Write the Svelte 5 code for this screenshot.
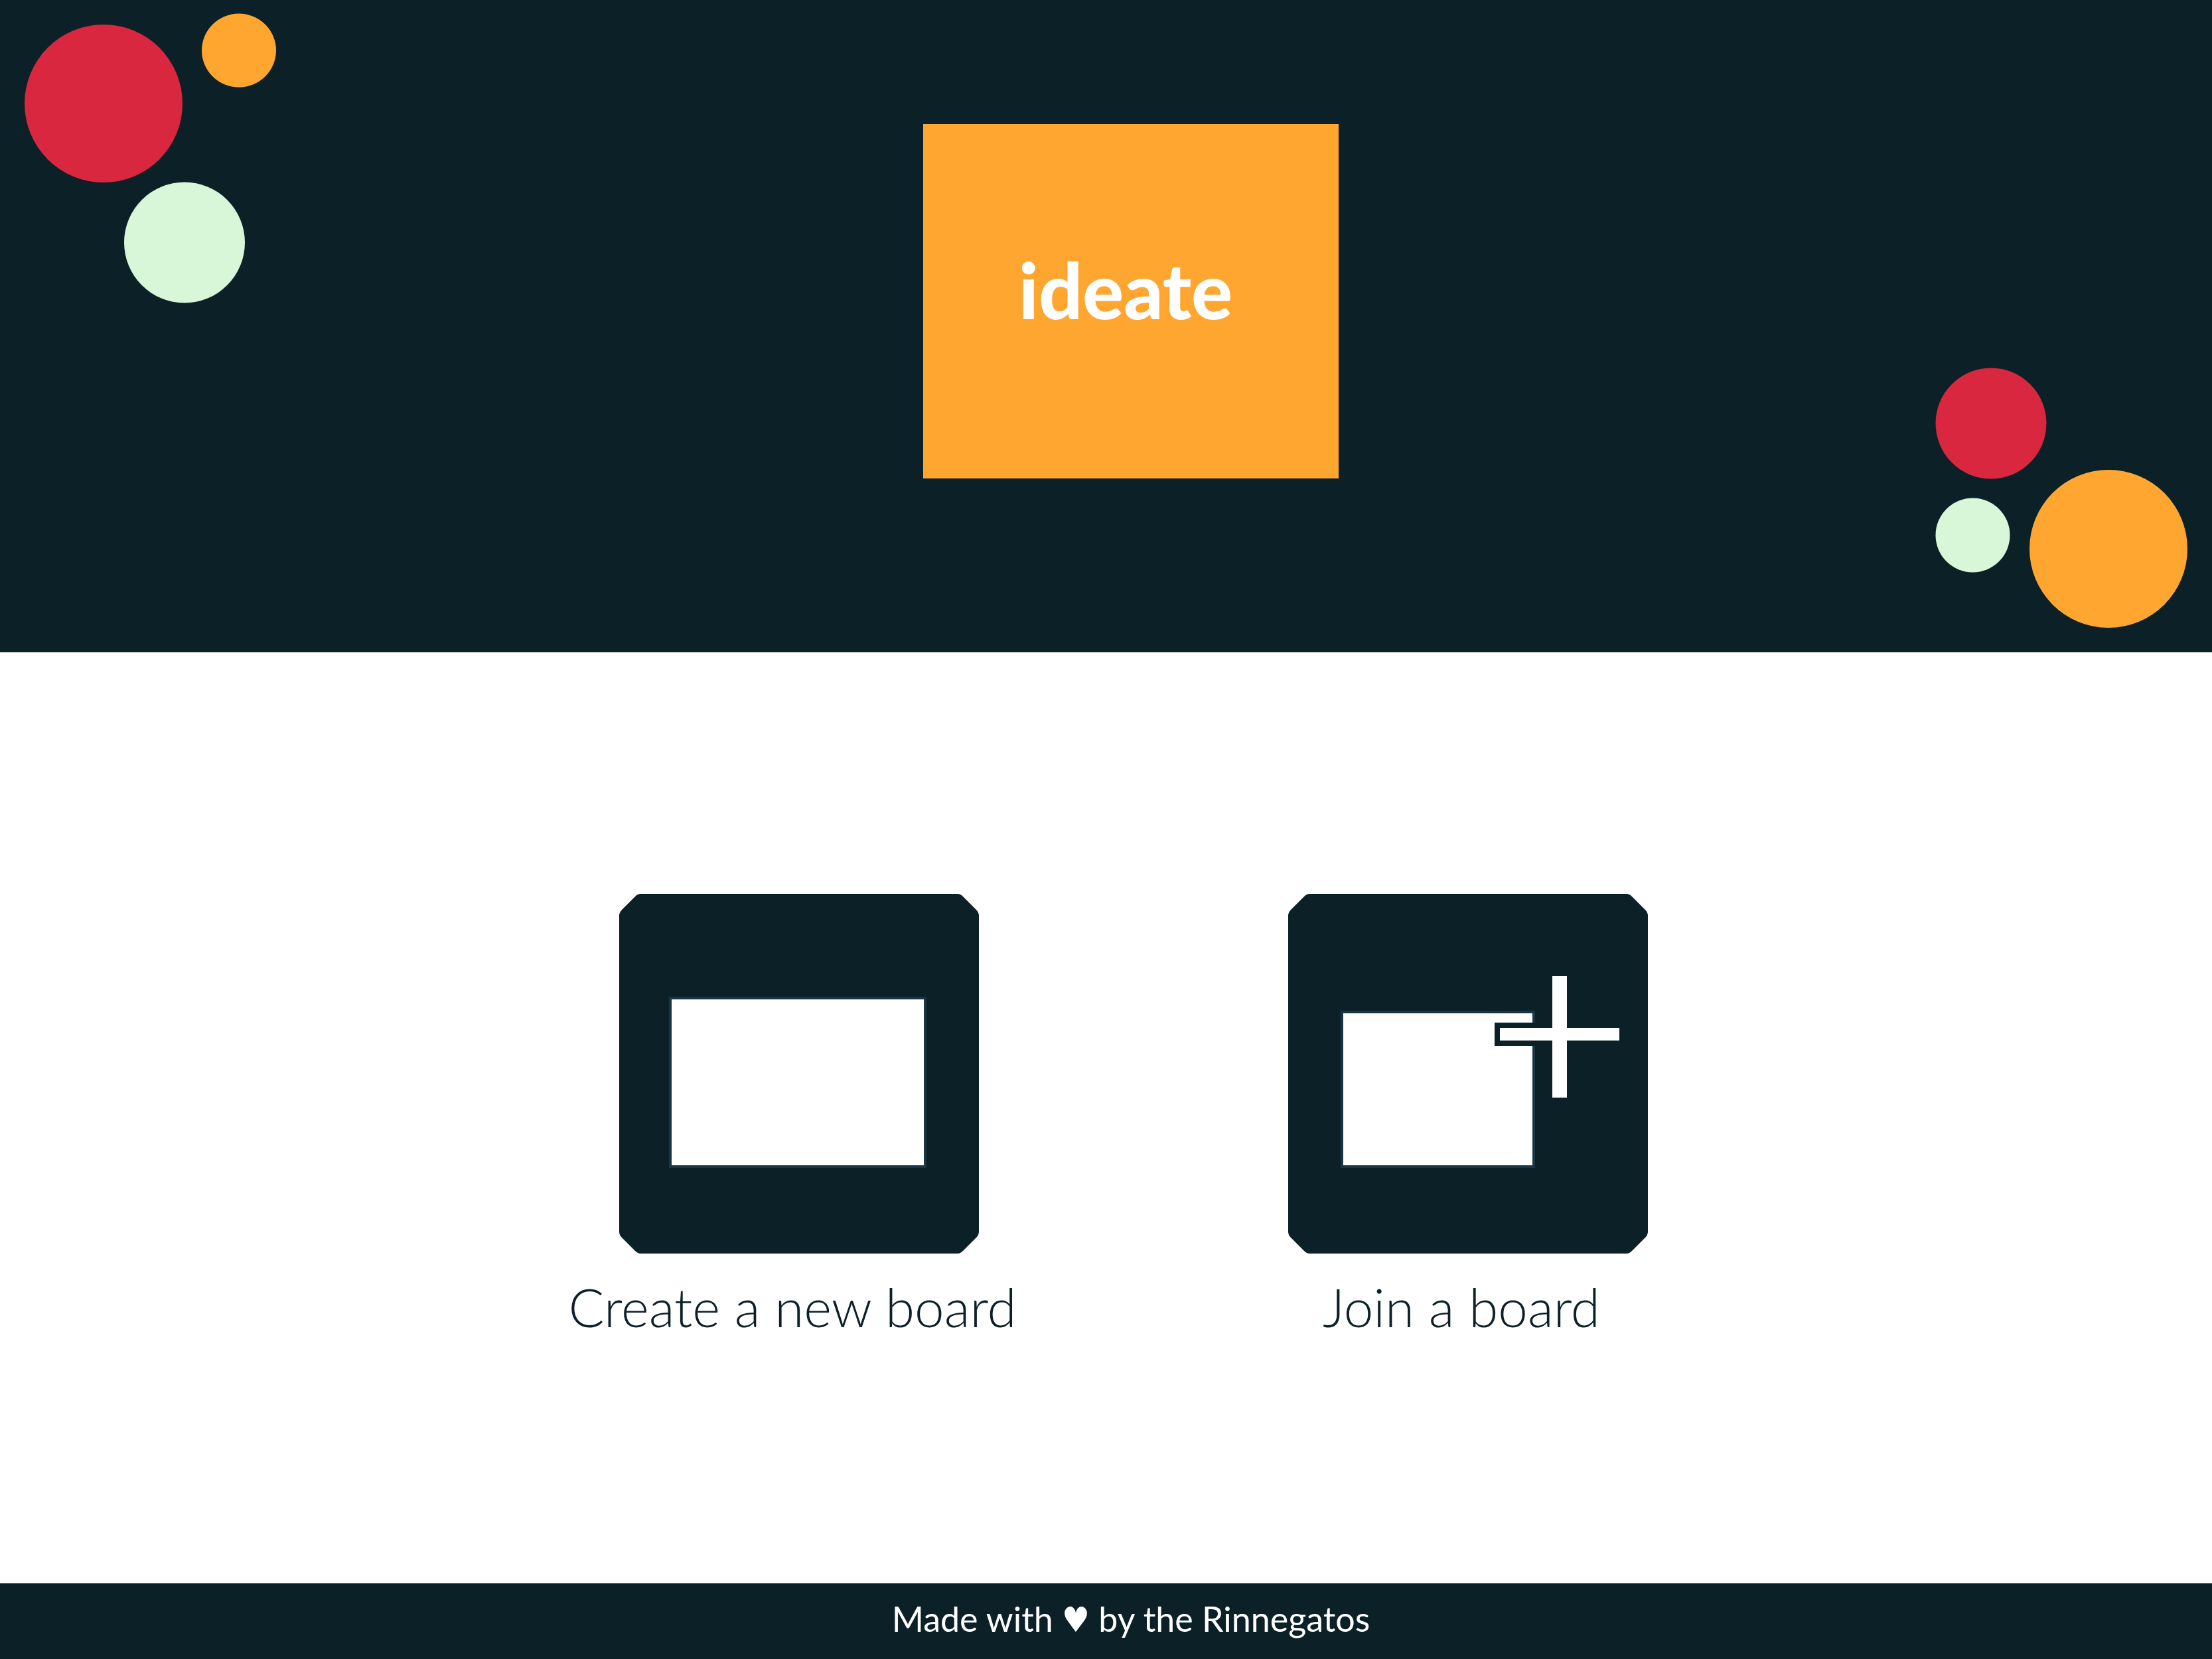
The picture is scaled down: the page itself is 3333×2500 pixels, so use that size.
<script>
  const actions = [
    { id: 'create', label: 'Create a new board' },
    { id: 'join', label: 'Join a board' },
  ];
</script>

<div class="page">
  <header class="hero">
    <svg class="bubbles top-left" viewBox="0 0 420 460" aria-hidden="true">
      <circle class="red" cx="156" cy="156" r="119" />
      <ellipse class="orange" cx="360" cy="76" rx="56" ry="55.5" />
      <circle class="mint" cx="278" cy="365.5" r="91" />
    </svg>

    <h1 class="logo">ideate</h1>

    <svg class="bubbles bottom-right" viewBox="0 0 380 392" aria-hidden="true">
      <circle class="red" cx="84" cy="84" r="83.5" />
      <circle class="mint" cx="56.5" cy="252.5" r="56" />
      <circle class="orange" cx="261" cy="273" r="119" />
    </svg>
  </header>

  <main class="actions">
    {#each actions as action (action.id)}
      <button class="action" type="button">
        <svg class="tile" viewBox="0 0 542 542" aria-hidden="true">
          <path
            class="plate"
            d="M32 0H510Q514 0 518 4L538 24Q542 28 542 33V509Q542 514 538 518L518 538Q514 542 510 542H32Q28 542 24 538L4 518Q0 514 0 509V33Q0 28 4 24L24 4Q28 0 32 0Z"
          />
          {#if action.id === 'create'}
            <rect class="sheet" x="77" y="157" width="384" height="254" />
          {:else}
            <rect class="sheet" x="81" y="178" width="289" height="233" />
            <rect class="plate" x="311" y="194" width="196" height="35" />
            <rect class="plus" x="319" y="202" width="180" height="19" />
            <rect class="plus" x="398" y="124" width="22" height="183" />
          {/if}
        </svg>
        <span class="caption">{action.label}</span>
      </button>
    {/each}
  </main>

  <footer class="footer">
    <p>Made with <span class="heart">♥</span> by the Rinnegatos</p>
  </footer>
</div>

<style>
  :global(body) {
    margin: 0;
  }

  .page {
    display: flex;
    flex-direction: column;
    min-height: 100vh;
    background: #fff;
    color: #0c2027;
    font-family: Lato, 'Liberation Sans', sans-serif;
    font-weight: 400;
  }

  .hero {
    position: relative;
    display: flex;
    justify-content: center;
    padding: 187px 0 262px 75px;
    background: #0c2027;
  }

  .logo {
    box-sizing: border-box;
    display: flex;
    align-items: center;
    justify-content: center;
    width: 626px;
    height: 534px;
    margin: 0;
    padding: 0 16px 34px 0;
    background: #ffa630;
    color: #fff;
    font-size: 116px;
    font-weight: 900;
    line-height: 144px;
  }

  .bubbles {
    position: absolute;
  }

  .top-left {
    top: 0;
    left: 0;
    width: 420px;
    height: 460px;
  }

  .bottom-right {
    right: 37px;
    bottom: 37px;
    width: 380px;
    height: 392px;
  }

  .red {
    fill: #d8273e;
  }

  .orange {
    fill: #ffa630;
  }

  .mint {
    fill: #d7f7d8;
  }

  .actions {
    flex: 1;
    display: flex;
    align-items: center;
    justify-content: center;
    gap: 308px;
    padding: 3px 0 0 83px;
  }

  .action {
    display: flex;
    flex-direction: column;
    align-items: center;
    gap: 24px;
    width: 700px;
    padding: 0;
    border: 0;
    background: none;
    color: inherit;
    font: inherit;
    cursor: pointer;
  }

  .tile {
    width: 542px;
    height: 542px;
  }

  .plate {
    fill: #0c2027;
  }

  .sheet {
    fill: #fff;
    stroke: #1a3644;
    stroke-width: 4;
  }

  .plus {
    fill: #fff;
  }

  .caption {
    padding-right: 20px;
    font-size: 80px;
    font-weight: 300;
    line-height: 112px;
    white-space: nowrap;
  }

  .footer {
    padding: 0 0 8px 75px;
    background: #0c2027;
    color: #fff;
    text-align: center;
  }

  .footer p {
    margin: 0;
    font-size: 52px;
    line-height: 106px;
  }

  .heart {
    font-family: 'DejaVu Sans Condensed', 'DejaVu Sans', sans-serif;
    line-height: 52px;
  }
</style>
